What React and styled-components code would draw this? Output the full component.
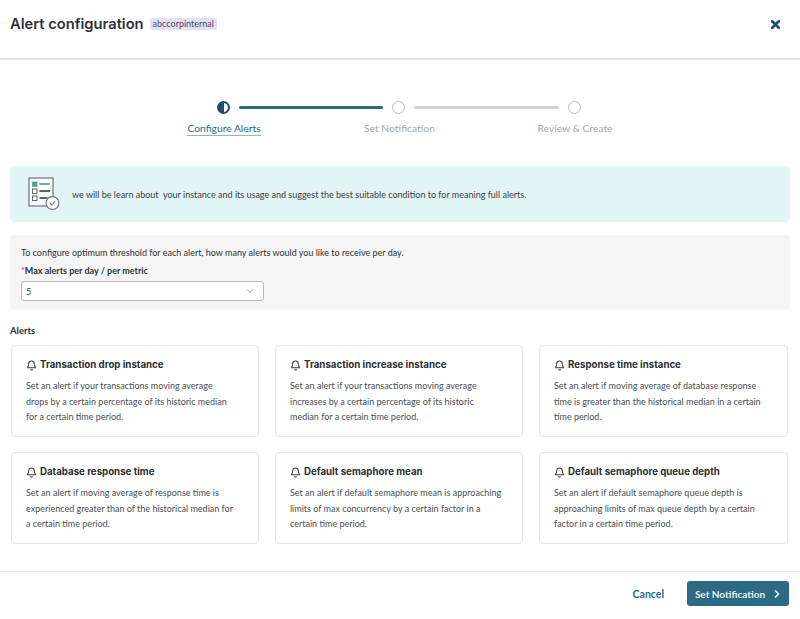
import React from 'react'
import styled, { createGlobalStyle } from 'styled-components';
import { X, ChevronDown, ChevronRight, Bell } from 'lucide-react';

const GlobalStyle = createGlobalStyle`
    html, body {
        margin: 0;
        padding: 0;
        background: #fff;
    }
    body {
        font-family: Lato, "Liberation Sans", sans-serif;
        color: #2f3437;
    }
    * {
        box-sizing: border-box;
    }
`;

const Page = styled.div`
    width: 800px;
    height: 619px;
    display: flex;
    flex-direction: column;
    background: #fff;
    overflow: hidden;
`;

const Header = styled.header`
    height: 60px;
    flex: none;
    display: flex;
    align-items: center;
    padding: 0 18px 10px 10px;
    border-bottom: 2px solid #dfe3e6;
`;

const Title = styled.h1`
    margin: 0;
    font: 600 14.7px Inter, sans-serif;
    color: #2c3135;
`;

const Tag = styled.span`
    margin-left: 6px;
    padding: 1px 3px;
    height: 12px;
    line-height: 10px;
    font-size: 9px;
    color: #4b4f58;
    background: #e4def8;
    border-radius: 2px;
`;

const CloseButton = styled.span`
    margin-left: auto;
    display: flex;
    color: #1e4f6b;
`;

const Stepper = styled.div`
    flex: none;
    margin-top: 41px;
    padding-right: 3px;
    display: flex;
    flex-direction: column;
    align-items: center;
`;

const StepTrack = styled.div`
    display: flex;
    align-items: center;
    gap: 9px;
    height: 13px;
`;

const StepDot = styled.span`
    width: 13px;
    height: 13px;
    border-radius: 50%;
    border: ${p => (p.$active ? '2px solid #1e4f6b' : '1.5px solid #b4bcc2')};
    background: ${p => (p.$active ? 'linear-gradient(90deg, #1e4f6b 50%, #fff 50%)' : '#fff')};
`;

const StepLine = styled.span`
    width: 144.5px;
    height: 3px;
    border-radius: 2px;
    background: ${p => (p.$active ? '#2a6a85' : '#cdd4d8')};
`;

const StepLabels = styled.div`
    margin: 8px 0 0 2px;
    display: grid;
    grid-template-columns: repeat(3, 175.5px);
    justify-items: center;
`;

const StepLabel = styled.span`
    font-size: 10.3px;
    line-height: 13px;
    color: ${p => (p.$active ? '#2a6a85' : '#a3a9ae')};
    border-bottom: 1px solid ${p => (p.$active ? '#8fb4c2' : 'transparent')};
`;

const Content = styled.main`
    flex: 1;
    padding: 0 10px;
    display: flex;
    flex-direction: column;
`;

const Banner = styled.div`
    margin-top: 30px;
    height: 56px;
    padding-left: 18px;
    display: flex;
    align-items: center;
    gap: 12px;
    font-size: 9px;
    color: #3b4044;
    background: #e3f4f6;
    border-radius: 4px;
`;

const Panel = styled.section`
    margin-top: 13px;
    height: 75px;
    padding: 11px 11px 0;
    background: #f5f5f5;
    border-radius: 4px;
`;

const PanelText = styled.p`
    margin: 0;
    font-size: 9px;
    line-height: 13px;
    color: #2f3437;
`;

const FieldLabel = styled.label`
    display: block;
    margin-top: 5px;
    font-size: 9px;
    font-weight: 700;
    line-height: 13px;
    color: #2f3437;

    span {
        color: #d9363e;
        font-weight: 400;
    }
`;

const SelectBox = styled.div`
    margin-top: 4px;
    width: 243px;
    height: 20px;
    padding: 0 8px 0 4px;
    display: flex;
    align-items: center;
    justify-content: space-between;
    font-size: 9px;
    background: #fff;
    border: 1px solid #b4bcc2;
    border-radius: 3px;
    color: #3b4044;

    svg {
        color: #7d868c;
    }
`;

const SectionTitle = styled.h2`
    margin: 15px 0 0;
    font-size: 9.5px;
    line-height: 12px;
    font-weight: 700;
    color: #2c3135;
`;

const CardGrid = styled.div`
    margin-top: 8px;
    padding-left: 1px;
    display: grid;
    grid-template-columns: 248px 248px 249px;
    grid-auto-rows: 92px;
    column-gap: 16px;
    row-gap: 15px;
`;

const Card = styled.article`
    padding: 12px 14px 0;
    background: #fff;
    border: 1px solid #e3e5e8;
    border-radius: 4px;
`;

const CardHead = styled.div`
    display: flex;
    align-items: center;
    gap: 3px;

    svg {
        color: #3a3f43;
        flex: none;
    }
`;

const CardTitle = styled.h3`
    margin: 0;
    font: 700 9.7px/14px Inter, sans-serif;
    color: #2c3135;
`;

const CardText = styled.div`
    margin-top: 6px;
    font-size: 9px;
    line-height: 15.5px;
    color: #4a4f53;
`;

const Footer = styled.footer`
    flex: none;
    height: 48px;
    padding: 9px 11px 0 0;
    display: flex;
    justify-content: flex-end;
    align-items: flex-start;
    gap: 23px;
    border-top: 1px solid #e6e8ea;
`;

const CancelButton = styled.button`
    height: 26px;
    padding: 0;
    border: 0;
    background: none;
    font: 700 10.5px Lato, sans-serif;
    color: #2a6a85;
`;

const PrimaryButton = styled.button`
    width: 102px;
    height: 25px;
    padding: 0 0 0 2px;
    display: flex;
    align-items: center;
    justify-content: center;
    gap: 6px;
    border: 0;
    border-radius: 3px;
    background: #2a6a85;
    color: #e8f1f4;
    font: 700 10px Lato, sans-serif;
`;

const alerts = [
    { title: 'Transaction drop instance', text: ['Set an alert if your transactions moving average', 'drops by a certain percentage of its historic median', 'for a certain time period.'] },
    { title: 'Transaction increase instance', text: ['Set an alert if your transactions moving average', 'increases by a certain percentage of its historic', 'median for a certain time period.'] },
    { title: 'Response time instance', text: ['Set an alert if moving average of database response', 'time is greater than the historical median in a certain', 'time period.'] },
    { title: 'Database response time', text: ['Set an alert if moving average of response time is', 'experienced greater than of the historical median for', 'a certain time period.'] },
    { title: 'Default semaphore mean', text: ['Set an alert if default semaphore mean is approaching', 'limits of max concurrency by a certain factor in a', 'certain time period.'] },
    { title: 'Default semaphore queue depth', text: ['Set an alert if default semaphore queue depth is', 'approaching limits of max queue depth by a certain', 'factor in a certain time period.'] },
];

function ChecklistIcon() {
    return (
        <svg width="32" height="34" viewBox="0 0 32 34" fill="none">
            <rect x="1" y="1" width="24" height="28" fill="#f6fbfb" stroke="#5f676b" strokeWidth="1.1" />
            <rect x="4.5" y="5" width="4.5" height="4.5" fill="#3fa98d" stroke="#4f8f7d" strokeWidth="0.6" />
            <rect x="4.5" y="12" width="4.5" height="4.5" stroke="#4f565a" strokeWidth="0.9" />
            <rect x="4.5" y="19" width="4.5" height="4.5" stroke="#4f565a" strokeWidth="0.9" />
            <path d="M11.5 7h10.5" stroke="#6fae9c" strokeWidth="2" />
            <path d="M11.5 14h10.5M11.5 21h8" stroke="#5c6468" strokeWidth="2" />
            <circle cx="24.5" cy="26" r="6.4" fill="#fff" stroke="#6d7478" strokeWidth="1.1" />
            <path d="M21.8 26l2 2 3.6-4" stroke="#6d7478" strokeWidth="1.1" />
        </svg>
    );
}

export default function App() {
    return (
        <Page>
            <GlobalStyle />
            <Header>
                <Title>Alert configuration</Title>
                <Tag>abccorpinternal</Tag>
                <CloseButton><X size={13} strokeWidth={5} /></CloseButton>
            </Header>
            <Stepper>
                <StepTrack>
                    <StepDot $active />
                    <StepLine $active />
                    <StepDot />
                    <StepLine />
                    <StepDot />
                </StepTrack>
                <StepLabels>
                    <StepLabel $active>Configure Alerts</StepLabel>
                    <StepLabel>Set Notification</StepLabel>
                    <StepLabel>Review &amp; Create</StepLabel>
                </StepLabels>
            </Stepper>
            <Content>
                <Banner>
                    <ChecklistIcon />
                    we will be learn about&nbsp; your instance and its usage and suggest the best suitable condition to for meaning full alerts.
                </Banner>
                <Panel>
                    <PanelText>To configure optimum threshold for each alert, how many alerts would you like to receive per day.</PanelText>
                    <FieldLabel><span>*</span>Max alerts per day / per metric</FieldLabel>
                    <SelectBox>5<ChevronDown size={10} /></SelectBox>
                </Panel>
                <SectionTitle>Alerts</SectionTitle>
                <CardGrid>
                    {alerts.map(alert => (
                        <Card key={alert.title}>
                            <CardHead>
                                <Bell size={11} strokeWidth={2.2} />
                                <CardTitle>{alert.title}</CardTitle>
                            </CardHead>
                            <CardText>
                                {alert.text.map(line => <div key={line}>{line}</div>)}
                            </CardText>
                        </Card>
                    ))}
                </CardGrid>
            </Content>
            <Footer>
                <CancelButton>Cancel</CancelButton>
                <PrimaryButton>Set Notification<ChevronRight size={12} strokeWidth={3.5} /></PrimaryButton>
            </Footer>
        </Page>
    )
}
